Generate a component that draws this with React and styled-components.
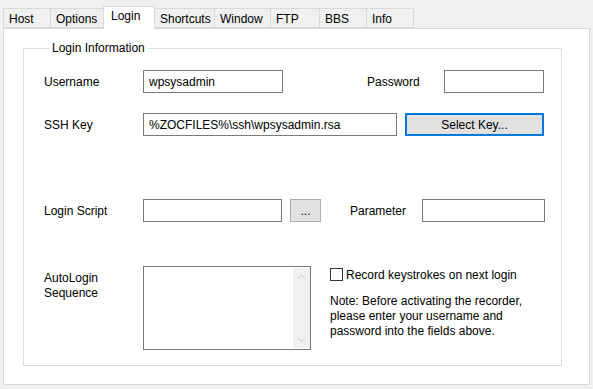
import styled, { createGlobalStyle } from 'styled-components';

const GlobalStyle = createGlobalStyle`
  html, body { margin: 0; padding: 0; }
  body {
    background: #f0f0f0;
    font-family: "Liberation Sans", Arial, sans-serif;
    font-size: 12px;
    color: #000;
  }
`;

const Window = styled.div`
  width: 593px;
  height: 389px;
  box-sizing: border-box;
  padding: 6px 3px 4px 3px;
  display: flex;
  flex-direction: column;
`;

const TabBar = styled.div`
  display: flex;
  align-items: flex-end;
  height: 22px;
`;

const Tab = styled.div`
  box-sizing: border-box;
  width: ${p => p.$w}px;
  height: ${p => (p.$active ? 23 : 20)}px;
  margin: ${p => (p.$active ? '0 -1px -1px 0' : '0 -1px 0 0')};
  padding-left: ${p => (p.$active ? 7 : 5)}px;
  line-height: ${p => (p.$active ? 18 : 20)}px;
  border: 1px solid #d9d9d9;
  border-bottom: ${p => (p.$active ? 'none' : '1px solid #d9d9d9')};
  background: ${p => (p.$active ? '#fff' : '#f0f0f0')};
  z-index: ${p => (p.$active ? 1 : 0)};
  white-space: nowrap;
`;

const Panel = styled.div`
  flex: 1;
  background: #fff;
  border: 1px solid #d9d9d9;
  padding: 12px 27px 18px 19px;
  display: flex;
  flex-direction: column;
`;

const GroupBox = styled.fieldset`
  flex: 1;
  margin: 0;
  padding: 0 20px 0 20px;
  border: 1px solid #dcdcdc;
  min-width: 0;
`;

const GroupTitle = styled.legend`
  margin-left: 5px;
  padding: 0 3px;
  line-height: 14px;
`;

const Row = styled.div`
  display: flex;
  align-items: ${p => (p.$top ? 'flex-start' : 'center')};
  margin-top: ${p => p.$mt}px;
  height: ${p => p.$h || 23}px;
`;

const Label = styled.div`
  box-sizing: border-box;
  width: ${p => p.$w}px;
  margin-left: ${p => p.$ml || 0}px;
  padding-top: ${p => p.$pt || 1}px;
  line-height: 15px;
  flex-shrink: 0;
`;

const TextBox = styled.input`
  box-sizing: border-box;
  width: ${p => p.$w}px;
  height: 23px;
  margin: 0;
  padding: 1px 5px 0;
  border: 1px solid #7a7a7a;
  background: #fff;
  font: inherit;
  color: #000;
  outline: none;
  flex-shrink: 0;
`;

const Button = styled.button`
  box-sizing: border-box;
  width: ${p => p.$w}px;
  height: 23px;
  margin: 0 0 0 ${p => p.$ml || 0}px;
  padding: 0;
  border: ${p => (p.$default ? '2px solid #0078d7' : '1px solid #adadad')};
  background: #e1e1e1;
  font: inherit;
  color: #000;
  flex-shrink: 0;
`;

const Memo = styled.div`
  box-sizing: border-box;
  width: 168px;
  height: 84px;
  border: 1px solid #7a7a7a;
  background: #fff;
  padding: 1px 0;
  display: flex;
  flex-shrink: 0;
`;

const MemoText = styled.textarea`
  flex: 1;
  border: none;
  resize: none;
  outline: none;
  margin: 0;
  padding: 2px 4px;
  font: inherit;
`;

const ScrollBar = styled.div`
  width: 17px;
  background: #f0f0f0;
  display: flex;
  flex-direction: column;
  justify-content: space-between;
`;

const ScrollArrow = styled.div`
  height: 17px;
  display: flex;
  align-items: center;
  justify-content: center;
`;

const SideColumn = styled.div`
  margin-left: 19px;
  display: flex;
  flex-direction: column;
`;

const CheckRow = styled.label`
  display: flex;
  align-items: center;
  height: 17px;
  gap: 3px;
`;

const CheckBox = styled.span`
  box-sizing: border-box;
  width: 13px;
  height: 13px;
  border: 1px solid #333;
  background: #fff;
`;

const Note = styled.div`
  margin-top: 11px;
  line-height: 15px;
`;

const Chevron = ({ down }) => (
  <svg width="9" height="6" viewBox="0 0 9 6">
    <polyline
      points={down ? '1,1.5 4.5,4.5 8,1.5' : '1,4.5 4.5,1.5 8,4.5'}
      fill="none"
      stroke="#c2c2c2"
      strokeWidth="1"
    />
  </svg>
);

const tabs = [
  { name: 'Host', w: 48 },
  { name: 'Options', w: 54 },
  { name: 'Login', w: 52, active: true },
  { name: 'Shortcuts', w: 61 },
  { name: 'Window', w: 57 },
  { name: 'FTP', w: 50 },
  { name: 'BBS', w: 48 },
  { name: 'Info', w: 48 },
];

export default function App() {
  return (
    <Window>
      <GlobalStyle />
      <TabBar>
        {tabs.map(t => (
          <Tab key={t.name} $w={t.w} $active={t.active}>
            {t.name}
          </Tab>
        ))}
      </TabBar>
      <Panel>
        <GroupBox>
          <GroupTitle>Login Information</GroupTitle>
          <Row $mt={15}>
            <Label $w={99}>Username</Label>
            <TextBox $w={140} defaultValue="wpsysadmin" />
            <Label $w={77} $ml={84}>Password</Label>
            <TextBox $w={100} />
          </Row>
          <Row $mt={20}>
            <Label $w={99}>SSH Key</Label>
            <TextBox $w={254} defaultValue="%ZOCFILES%\ssh\wpsysadmin.rsa" />
            <Button $w={139} $ml={8} $default>Select Key...</Button>
          </Row>
          <Row $mt={63}>
            <Label $w={99}>Login Script</Label>
            <TextBox $w={139} />
            <Button $w={31} $ml={8}>...</Button>
            <Label $w={72} $ml={29}>Parameter</Label>
            <TextBox $w={123} />
          </Row>
          <Row $mt={44} $h={84} $top>
            <Label $w={99} $pt={5}>AutoLogin<br />Sequence</Label>
            <Memo>
              <MemoText />
              <ScrollBar>
                <ScrollArrow><Chevron /></ScrollArrow>
                <ScrollArrow><Chevron down /></ScrollArrow>
              </ScrollBar>
            </Memo>
            <SideColumn>
              <CheckRow>
                <CheckBox />
                Record keystrokes on next login
              </CheckRow>
              <Note>
                Note: Before activating the recorder,<br />
                please enter your username and<br />
                password into the fields above.
              </Note>
            </SideColumn>
          </Row>
        </GroupBox>
      </Panel>
    </Window>
  );
}
